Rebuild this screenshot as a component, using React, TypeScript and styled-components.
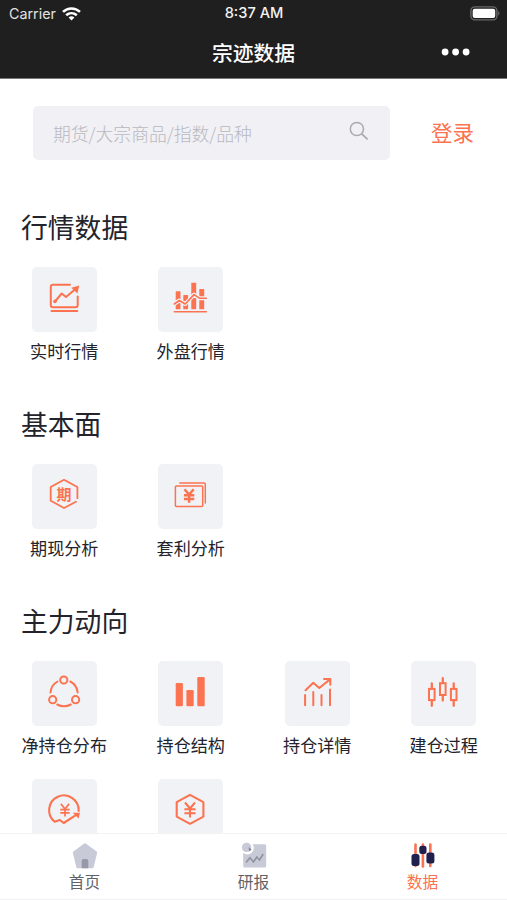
import React from "react";
import styled, { createGlobalStyle } from "styled-components";

const ORANGE = "#fb7350";
const TILE = "#f1f2f5";

const GlobalStyle = createGlobalStyle`
  * { box-sizing: border-box; }
  body {
    margin: 0;
    background: #fff;
    font-family: "Noto Sans CJK SC", sans-serif;
    color: #23232b;
  }
  svg { display: block; }
`;

const Screen = styled.div`
  width: 507px;
  height: 900px;
  display: flex;
  flex-direction: column;
  overflow: hidden;
  background: #fff;
`;

const Header = styled.header`
  height: 79px;
  flex: none;
  background: #1f1f1f;
  border-bottom: 1px solid #777;
  color: #fff;
`;

const StatusBar = styled.div`
  height: 27px;
  display: grid;
  grid-template-columns: 1fr auto 1fr;
  align-items: center;
  padding: 0 6px 0 9px;
  font: 400 14.3px/27px Inter, sans-serif;
`;

const Carrier = styled.div`
  display: flex;
  align-items: center;
  gap: 6px;
  color: #e2e2e2;
`;

const Clock = styled.div`
  font-weight: 500;
  font-size: 14.6px;
  color: #f2f2f2;
  padding-right: 2px;
`;

const Battery = styled.div`
  display: flex;
  justify-content: flex-end;
`;

const TitleBar = styled.div`
  height: 49px;
  display: grid;
  grid-template-columns: 1fr auto 1fr;
  align-items: center;
`;

const PageTitle = styled.h1`
  grid-column: 2;
  margin: 0;
  font-size: 20.8px;
  font-weight: 500;
  line-height: 46px;
`;

const More = styled.div`
  display: flex;
  justify-content: flex-end;
  padding-right: 37px;
`;

const Content = styled.main`
  flex: 1;
  min-height: 0;
  overflow: hidden;
`;

const SearchRow = styled.div`
  display: flex;
  align-items: center;
  padding: 27px 0 0 33px;
`;

const SearchBox = styled.div`
  width: 357px;
  height: 54px;
  display: flex;
  align-items: center;
  justify-content: space-between;
  padding: 0 21px 0 20px;
  border-radius: 5px;
  background: #f0f0f5;
`;

const Placeholder = styled.span`
  font-size: 17.8px;
  font-weight: 300;
  line-height: 54px;
  color: #b9b9bf;
`;

const Login = styled.a`
  margin-left: 41px;
  font-size: 21.5px;
  line-height: 52px;
  padding-bottom: 2px;
  color: ${ORANGE};
`;

const Section = styled.section<{ $first?: boolean }>`
  padding-top: ${(p) => (p.$first ? 47 : 39)}px;
`;

const SectionTitle = styled.h2`
  margin: 0 0 0 21px;
  font-size: 26.8px;
  font-weight: 400;
  line-height: 40px;
`;

const TileGrid = styled.div`
  display: grid;
  grid-template-columns: repeat(4, 126.5px);
  margin: 19.5px 0 0 1px;
  row-gap: 19.5px;
`;

const Entry = styled.div`
  height: 98.5px;
  display: flex;
  flex-direction: column;
  align-items: center;
`;

const Tile = styled.div`
  width: 65px;
  height: 65px;
  border-radius: 5px;
  background: ${TILE};
`;

const EntryLabel = styled.span`
  margin-top: 5.5px;
  font-size: 17.1px;
  line-height: 28px;
  white-space: nowrap;
`;

const TabBar = styled.nav`
  height: 67px;
  flex: none;
  display: grid;
  grid-template-columns: repeat(3, 1fr);
  border-top: 1px solid #f3f3f4;
  border-bottom: 1px solid #f1f1f3;
  background: #fff;
`;

const Tab = styled.div<{ $active?: boolean }>`
  display: flex;
  flex-direction: column;
  align-items: center;
  padding-top: 8px;
  font-size: 15.7px;
  line-height: 24px;
  color: ${(p) => (p.$active ? ORANGE : "#626266")};
`;

const IconSvg = styled.svg`
  width: 65px;
  height: 65px;
  fill: none;
  stroke: ${ORANGE};
  stroke-width: 2;
  stroke-linejoin: round;
  stroke-linecap: round;
`;

const Solid = styled.g`
  fill: ${ORANGE};
  stroke: none;
`;

const Glyph = styled.text`
  font: 700 15px "Noto Sans CJK SC", sans-serif;
  text-anchor: middle;
  fill: ${ORANGE};
  stroke: none;
`;

function Icon({ children }: { children: React.ReactNode }) {
  return <IconSvg viewBox="0 0 65 65">{children}</IconSvg>;
}

function Yen({ x, y, w, h, weight }: { x: number; y: number; w: number; h: number; weight: number }) {
  const l = x - w / 2;
  const r = x + w / 2;
  const t = y - h / 2;
  return (
    <path
      strokeWidth={weight}
      strokeLinecap="butt"
      d={`M${l + 0.6} ${t}L${x} ${t + h * 0.4}L${r - 0.6} ${t}M${x} ${t + h * 0.4}V${y + h / 2}M${l} ${t + h * 0.45}H${r}M${l} ${t + h * 0.72}H${r}`}
    />
  );
}

const icons = {
  live: (
    <Icon>
      <path d="M38 17.8H21Q18.8 17.8 18.8 20V38Q18.8 40.2 21 40.2H43.5Q45.7 40.2 45.7 38V29.5M19.5 43.9H45.3" />
      <path d="M23 34.5L29.7 26.5L34 30L43.5 22" />
      <Solid>
        <path d="M39.3 20.8L47.3 18.6L45.4 26.4Z" />
        <circle cx="23" cy="34.4" r="1.8" />
      </Solid>
    </Icon>
  ),
  overseas: (
    <Icon>
      <Solid>
        <rect x="17.7" y="24.3" width="4.8" height="18" rx=".6" />
        <rect x="25.3" y="28" width="4.8" height="14.3" rx=".6" />
        <rect x="33.3" y="15.7" width="4.9" height="26.6" rx=".6" />
        <rect x="41.3" y="22" width="4.9" height="20.3" rx=".6" />
      </Solid>
      <path stroke={TILE} strokeWidth="4" d="M16 37L21.3 33.5L27.3 37L36 27.6L41.5 31.2H48.3" />
      <path strokeWidth="1.6" d="M16.3 37L21.3 33.5L27.3 37L36 27.6L41.5 31.2H48.3M16.3 44.8H48.3" />
    </Icon>
  ),
  futures: (
    <Icon>
      <path strokeWidth="1.8" d="M45.4 34.2V23L32 15.8L18.7 23V36.8L32 44L44 37.7" />
      <Glyph x="32" y="35.5">期</Glyph>
    </Icon>
  ),
  arbitrage: (
    <Icon>
      <path strokeWidth="1.5" d="M21.8 19.1H46Q47.3 19.1 47.3 20.5V39" />
      <rect strokeWidth="1.5" x="17.4" y="21.9" width="27.3" height="20.7" rx="1" />
      <Yen x={31.1} y={32} w={10.4} h={13.5} weight={2.5} />
    </Icon>
  ),
  network: (
    <Icon>
      <circle cx="31.8" cy="19" r="3.6" />
      <circle cx="20.7" cy="38.7" r="3.6" />
      <circle cx="43.6" cy="38.7" r="3.6" />
      <path d="M18.5 31.5A14 14 0 0 1 25.5 20.5M38.3 20.5A14 14 0 0 1 45.6 31.5M25.2 43.5A14.5 14.5 0 0 0 38.8 43.5" />
    </Icon>
  ),
  bars: (
    <Icon>
      <Solid>
        <rect x="17.7" y="22" width="7.2" height="23.2" rx="1.2" />
        <rect x="28.4" y="29" width="7.3" height="16.2" rx="1.2" />
        <rect x="39.3" y="16" width="7.4" height="29.2" rx="1.2" />
      </Solid>
    </Icon>
  ),
  trend: (
    <Icon>
      <path d="M20.5 29.2L28.3 21.7L34.3 27L45 18.4M39 18.1H45.3V23.7M20.1 34V44.2M28.3 31V44.2M36.5 34V44.2M45 28.5V44.2" />
    </Icon>
  ),
  candles: (
    <Icon>
      <g strokeLinejoin="miter">
        <rect x="18" y="27.9" width="5.6" height="11.2" />
        <rect x="29" y="22.2" width="5.6" height="11.8" />
        <rect x="39.9" y="27.9" width="5.6" height="11.2" />
      </g>
      <path
        strokeWidth="2.3"
        d="M20.8 22.5V27.5M20.8 39.5V44.8M31.8 17.2V22M31.8 34V39.6M42.7 22.5V27.5M42.7 39.5V44.8"
      />
    </Icon>
  ),
  cycle: (
    <Icon>
      <path strokeWidth="2.1" d="M46.7 32A14.8 14.8 0 1 0 22.7 42.8L27.8 41L31.7 44L43.5 36.3" />
      <Solid>
        <path d="M40.8 33.8L48 33.8L46.6 39.5Z" />
      </Solid>
      <Yen x={33} y={31.2} w={9.4} h={12.6} weight={1.7} />
    </Icon>
  ),
  yenHex: (
    <Icon>
      <path strokeWidth="2.1" d="M32 15.9L45.4 23.2V37.6L32 44.8L18.7 37.6V23.2Z" />
      <Yen x={32} y={31} w={11.2} h={15} weight={2} />
    </Icon>
  ),
};

type IconName = keyof typeof icons;

const sections: { title: string; entries: [IconName, string][] }[] = [
  { title: "行情数据", entries: [["live", "实时行情"], ["overseas", "外盘行情"]] },
  { title: "基本面", entries: [["futures", "期现分析"], ["arbitrage", "套利分析"]] },
  {
    title: "主力动向",
    entries: [
      ["network", "净持仓分布"],
      ["bars", "持仓结构"],
      ["trend", "持仓详情"],
      ["candles", "建仓过程"],
      ["cycle", ""],
      ["yenHex", ""],
    ],
  },
];

export default function App() {
  return (
    <Screen>
      <GlobalStyle />
      <Header>
        <StatusBar>
          <Carrier>
            Carrier
            <svg width="19" height="14" viewBox="0 0 19 14" fill="none" stroke="#fff" strokeWidth="2.6">
              <path d="M1 4.9C5.8.3 13.2.3 18 4.9" />
              <path d="M4.2 8.3C7.3 5.5 11.7 5.5 14.8 8.3" />
              <path d="M6.6 10.4Q9.5 8 12.4 10.4L9.5 13.5Z" fill="#fff" stroke="none" />
            </svg>
          </Carrier>
          <Clock>8:37 AM</Clock>
          <Battery>
            <svg width="31" height="15" viewBox="0 0 31 15">
              <rect x=".9" y=".9" width="26" height="13" rx="4" fill="none" stroke="#69696b" strokeWidth="1.4" />
              <rect x="2.7" y="2.8" width="22.5" height="9.3" rx="2" fill="#fff" />
              <path d="M28.2 5Q30.8 7.4 28.2 9.8Z" fill="#69696b" />
            </svg>
          </Battery>
        </StatusBar>
        <TitleBar>
          <PageTitle>宗迹数据</PageTitle>
          <More>
            <svg width="30" height="8" viewBox="0 0 30 8" fill="#fff">
              <circle cx="5.1" cy="4" r="3.4" />
              <circle cx="15.6" cy="4" r="3.4" />
              <circle cx="26.1" cy="4" r="3.4" />
            </svg>
          </More>
        </TitleBar>
      </Header>
      <Content>
        <SearchRow>
          <SearchBox>
            <Placeholder>期货/大宗商品/指数/品种</Placeholder>
            <svg width="20" height="26" viewBox="0 0 20 26" fill="none" stroke="#aaaab0" strokeWidth="1.5">
              <circle cx="7.9" cy="9" r="6.6" />
              <path d="M12.8 13.8L18.6 19.4" strokeWidth="1.8" />
            </svg>
          </SearchBox>
          <Login>登录</Login>
        </SearchRow>
        {sections.map((section, i) => (
          <Section key={section.title} $first={i === 0}>
            <SectionTitle>{section.title}</SectionTitle>
            <TileGrid>
              {section.entries.map(([icon, label]) => (
                <Entry key={icon}>
                  <Tile>{icons[icon]}</Tile>
                  <EntryLabel>{label}</EntryLabel>
                </Entry>
              ))}
            </TileGrid>
          </Section>
        ))}
      </Content>
      <TabBar>
        <Tab>
          <svg width="26" height="28" viewBox="0 0 26 28">
            <path
              d="M13 2.5L24 10.5L20.5 25H5.5L2 10.5Z"
              fill="#c8cad8"
              stroke="#c8cad8"
              strokeWidth="2.4"
              strokeLinejoin="round"
            />
            <path d="M9.7 26.2V19Q9.7 17 11.7 17H14.3Q16.3 17 16.3 19V26.2Z" fill="#9799a8" />
          </svg>
          首页
        </Tab>
        <Tab>
          <svg width="26" height="28" viewBox="0 0 26 28">
            <rect x="2.2" y="2.2" width="23" height="23.2" rx="1.5" fill="#c8cad8" />
            <circle cx="6.4" cy="6" r="6.4" fill="#fff" />
            <circle cx="5.6" cy="5.4" r="4.7" fill="#c8cad8" />
            <path d="M7.5 5.2L10.8 7.4L8.2 9.6Z" fill="#858797" />
            <path d="M5 20.5L9 15.8L12.5 20L15.8 15L18.5 18L22.2 12" fill="none" stroke="#9092a2" strokeWidth="1.6" />
          </svg>
          研报
        </Tab>
        <Tab $active>
          <svg width="26" height="28" viewBox="0 0 26 28">
            <path d="M5.5 2.5V24M12.9 2.5V24.5M20.3 2.5V24" stroke={ORANGE} strokeWidth="2.6" strokeLinecap="round" />
            <g fill="#20204f">
              <rect x="1.5" y="12" width="8" height="12" rx="2.5" />
              <rect x="9.3" y="3.8" width="7.2" height="8.2" rx="2.5" />
              <rect x="16.4" y="10.5" width="8" height="11" rx="2.5" />
            </g>
          </svg>
          数据
        </Tab>
      </TabBar>
    </Screen>
  );
}
